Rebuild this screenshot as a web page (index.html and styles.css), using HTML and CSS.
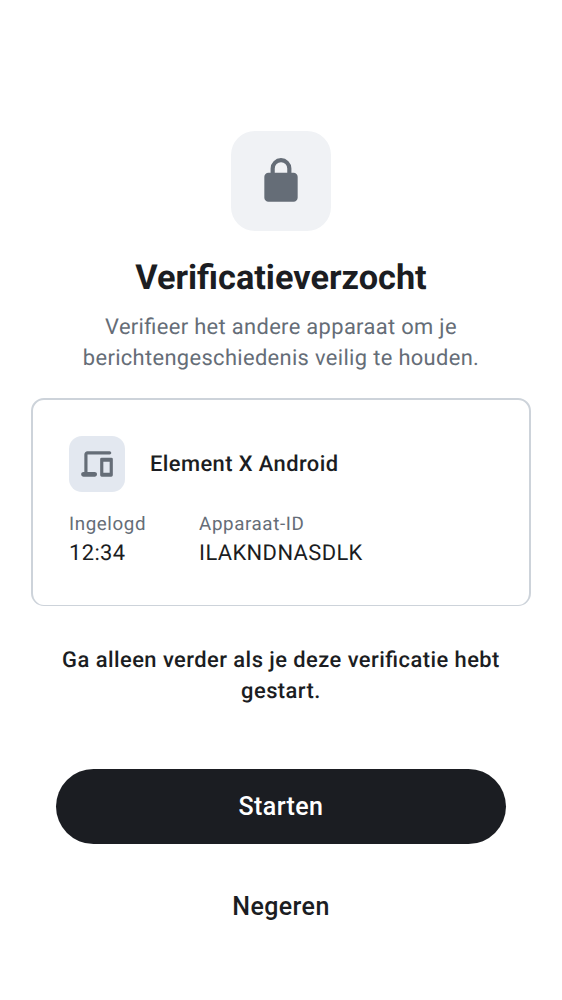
FILE: index.html
```html
<!DOCTYPE html>
<html lang="nl">
<head>
<meta charset="utf-8">
<title>Verificatieverzocht</title>
<link rel="stylesheet" href="styles.css">
</head>
<body>
<main class="screen">
  <div class="hero-icon">
    <svg width="50" height="50" viewBox="0 0 24 24" fill="currentColor"><path d="M6 22q-.825 0-1.412-.587A1.93 1.93 0 0 1 4 20V10q0-.825.588-1.412A1.93 1.93 0 0 1 6 8h1V6q0-2.075 1.463-3.537Q9.926 1 12 1t3.537 1.463T17 6v2h1q.824 0 1.413.588Q20 9.175 20 10v10q0 .824-.587 1.413A1.93 1.93 0 0 1 18 22zM9 8h6V6q0-1.250-.875-2.125A2.900 2.900 0 0 0 12 3q-1.250 0-2.125.875A2.900 2.900 0 0 0 9 6z"/></svg>
  </div>
  <h1 class="title">Verificatieverzocht</h1>
  <p class="subtitle">Verifieer het andere apparaat om je<br>berichtengeschiedenis veilig te houden.</p>
  <section class="card">
    <div class="device">
      <div class="device-icon">
        <svg width="38" height="38" viewBox="0 0 24 24" fill="currentColor"><path d="M3.500 20q-.625 0-1.062-.437A1.450 1.450 0 0 1 2 18.500q0-.625.438-1.062A1.450 1.450 0 0 1 3.500 17H4V6q0-.824.588-1.412A1.930 1.930 0 0 1 6 4h14q.424 0 .712.287Q21 4.576 21 5t-.288.713A.970.970 0 0 1 20 6H6v11h4.500q.624 0 1.063.438.437.436.437 1.062 0 .624-.437 1.063A1.450 1.450 0 0 1 10.500 20zM15 20a.970.970 0 0 1-.713-.288A.970.970 0 0 1 14 19V9q0-.424.287-.713A.970.970 0 0 1 15 8h6q.424 0 .712.287Q22 8.576 22 9v10q0 .424-.288.712A.970.970 0 0 1 21 20zm1-2.500h4v-7h-4z"/></svg>
      </div>
      <span class="device-name">Element X Android</span>
    </div>
    <dl class="details">
      <div><dt>Ingelogd</dt><dd>12:34</dd></div>
      <div><dt>Apparaat-ID</dt><dd>ILAKNDNASDLK</dd></div>
    </dl>
  </section>
  <p class="notice">Ga alleen verder als je deze verificatie hebt<br>gestart.</p>
  <div class="actions">
    <button class="button primary">Starten</button>
    <button class="button">Negeren</button>
  </div>
</main>
</body>
</html>
```
FILE: styles.css
```css
* { box-sizing: border-box; margin: 0; padding: 0; }
body { background: #fff; color: #1b1d22; font-family: Roboto, sans-serif; font-feature-settings: "liga" 1; text-rendering: geometricPrecision; }
.screen { height: 1000px; padding: 131px 31px 0; display: flex; flex-direction: column; align-items: center; text-align: center; }
.hero-icon { width: 100px; height: 100px; border-radius: 24px; background: #f0f2f5; color: #656d77; display: flex; align-items: center; justify-content: center; }
.title { margin-top: 26px; font-size: 34.3px; line-height: 42px; font-weight: 700; white-space: nowrap; }
.subtitle { margin-top: 13px; font-size: 21.9px; line-height: 31px; letter-spacing: .34px; color: #656d77; white-space: nowrap; }
.card { width: 500px; height: 208px; margin-top: 24px; padding: 36px; border: 2px solid #cdd3da; border-bottom-width: 1px; border-radius: 13px; text-align: left; }
.device { display: flex; align-items: center; gap: 25px; }
.device-icon { width: 56px; height: 56px; border-radius: 13px; background: #e3e8f0; color: #656d77; display: flex; align-items: center; justify-content: center; }
.device-name { font-size: 21.9px; font-weight: 500; letter-spacing: .42px; }
.details { display: flex; gap: 53px; margin-top: 19px; }
.details dt { font-size: 18.75px; line-height: 27px; letter-spacing: .6px; color: #656d77; }
.details dd { font-size: 21.9px; line-height: 31px; letter-spacing: .39px; }
.notice { margin-top: 39px; font-size: 21.9px; line-height: 31px; font-weight: 500; letter-spacing: .46px; white-space: nowrap; }
.actions { margin-top: 62px; display: flex; flex-direction: column; gap: 25px; }
.button { width: 450px; height: 75px; border: 0; border-radius: 38px; background: none; color: #1b1d22; font: 500 25px/37px Roboto, sans-serif; letter-spacing: .4px; }
.primary { background: #1b1d22; color: #fff; }
```
